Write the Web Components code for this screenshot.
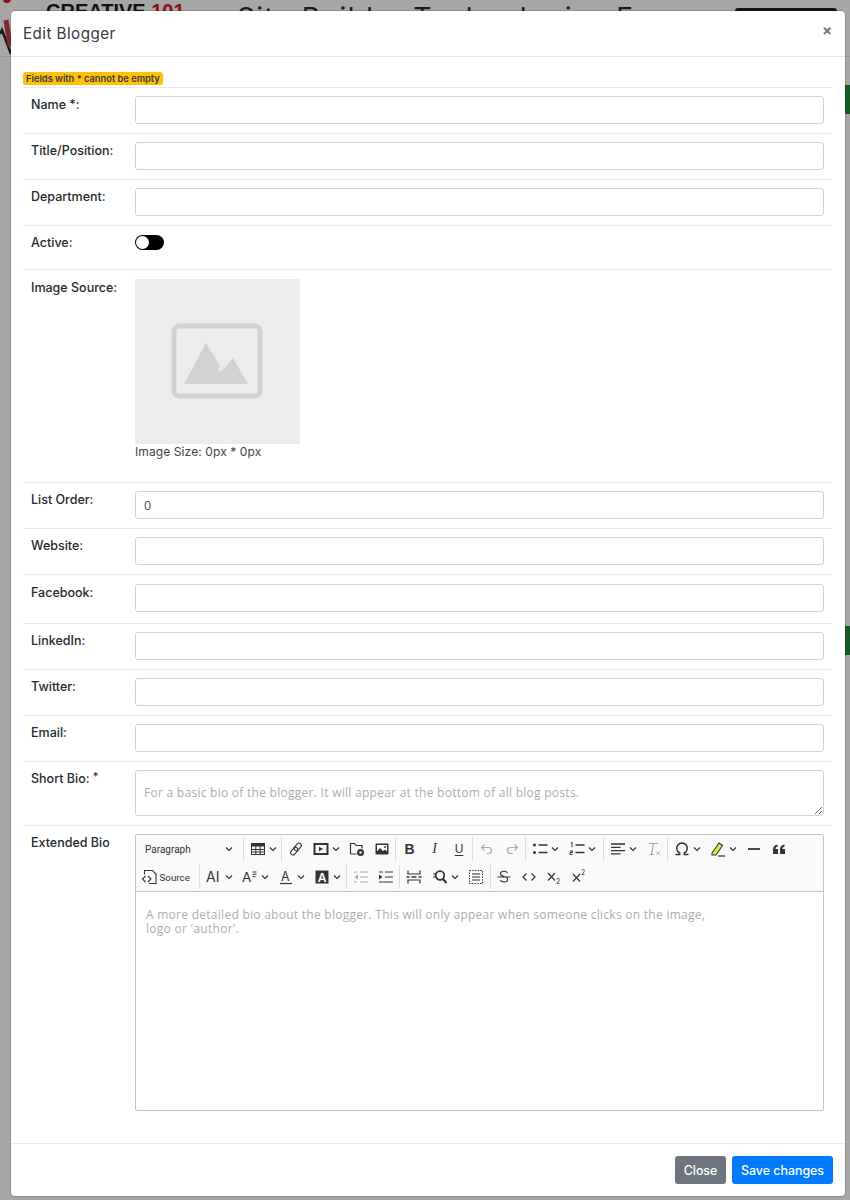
<!DOCTYPE html>
<html>
<head>
<meta charset="utf-8">
<title>Edit Blogger</title>
<style>
  html, body { margin: 0; height: 100%; }
  body { background: #a6a6a6; font-family: Inter, "Open Sans", sans-serif; color: #212529; overflow: hidden; }
</style>
</head>
<body>
<site-backdrop></site-backdrop>
<blogger-modal heading="Edit Blogger">
  <form-row label="Name *:"><text-field></text-field></form-row>
  <form-row label="Title/Position:"><text-field></text-field></form-row>
  <form-row label="Department:"><text-field></text-field></form-row>
  <form-row label="Active:" style="--row-bottom:19px"><toggle-switch></toggle-switch></form-row>
  <form-row label="Image Source:" style="--row-top:9px;--row-bottom:23px"><image-picker></image-picker></form-row>
  <form-row label="List Order:"><text-field value="0"></text-field></form-row>
  <form-row label="Website:"><text-field></text-field></form-row>
  <form-row label="Facebook:" style="--row-top:9px;--row-bottom:11px"><text-field></text-field></form-row>
  <form-row label="LinkedIn:"><text-field></text-field></form-row>
  <form-row label="Twitter:"><text-field></text-field></form-row>
  <form-row label="Email:"><text-field></text-field></form-row>
  <form-row label="Short Bio:" star><text-field multiline placeholder="For a basic bio of the blogger. It will appear at the bottom of all blog posts."></text-field></form-row>
  <form-row label="Extended Bio"><rich-editor placeholder="A more detailed bio about the blogger. This will only appear when someone clicks on the image, logo or 'author'."></rich-editor></form-row>
</blogger-modal>

<script>
// Lo que se ve detras del modal, oscurecido
class SiteBackdrop extends HTMLElement {
  constructor() {
    super();
    this.attachShadow({ mode: 'open' });
  }
  connectedCallback() {
    this.shadowRoot.innerHTML = `
      <style>
        :host { display: block; position: absolute; inset: 0; overflow: hidden; }
        .brand { position: absolute; left: 46px; top: 0; font: 700 20px/22px "Liberation Sans", sans-serif; color: #111; white-space: nowrap; }
        .brand b { color: #8f1111; }
        .title { position: absolute; left: 237px; top: 0; font: 400 28px/36px Inter, sans-serif; color: #1a1a1a; white-space: nowrap; letter-spacing: 1.4px; }
        .btn { position: absolute; left: 735px; top: 8px; width: 102px; height: 30px; background: #151515; border-radius: 3px; }
        .strip { position: absolute; left: 845px; width: 5px; height: 29px; background: #145a25; }
        .logo { position: absolute; left: 0; top: 0; }
        .line { position: absolute; left: 0; right: 0; top: 56px; height: 1px; background: #9a9a9a; }
      </style>
      <div class="brand">CREATIVE <b>101</b></div>
      <div class="title">Site Builder Technologies F</div>
      <div class="btn"></div>
      <div class="line"></div>
      <div class="strip" style="top:85px"></div>
      <div class="strip" style="top:626px"></div>
      <svg class="logo" width="12" height="56" viewBox="0 0 12 56">
        <circle cx="7" cy="-1" r="4" fill="#8f1111"/>
        <path d="M0 34 L2 30 L11 54" fill="none" stroke="#1a1a1a" stroke-width="2.5"/>
        <path d="M6 20 L10 46" stroke="#7d2a2a" stroke-width="5"/>
      </svg>
    `;
  }
}
customElements.define('site-backdrop', SiteBackdrop);

class BloggerModal extends HTMLElement {
  constructor() {
    super();
    this.attachShadow({ mode: 'open' });
  }
  connectedCallback() {
    this.shadowRoot.innerHTML = `
      <style>
        :host { display: flex; flex-direction: column; position: absolute; left: 11px; top: 11px; width: 834px; height: 1185px; box-sizing: border-box;
          background: #fff; border-radius: 4px; box-shadow: 0 0 0 1px rgba(0,0,0,.15); font-family: Inter, sans-serif; }
        header { height: 46px; box-sizing: border-box; display: flex; align-items: center; justify-content: space-between; padding: 0 12px 0 12px; border-bottom: 1px solid #e6e6e6; }
        h1 { margin: 0; font-size: 15.2px; font-weight: 400; letter-spacing: .45px; color: #343a40; }
        .x { font-size: 15px; font-weight: 700; color: #777; width: 12px; margin: -6px 0 0; line-height: 1; text-align: center; }
        main { flex: 1; padding: 15px 13px 0 12px; min-height: 0; }
        .badge { display: block; width: fit-content; height: 13px; line-height: 13px; padding: 0 3px; margin-bottom: 2px; background: #ffc107; color: #343a40; border-radius: 3px; font-size: 9.3px; font-weight: 600; }
        footer { height: 53px; box-sizing: border-box; border-top: 1px solid #e9ecef; display: flex; justify-content: flex-end; align-items: center; gap: 6px; padding: 0 12px 0 0; }
        button { height: 28px; border: 0; border-radius: 3px; color: #fff; font: 500 12.4px Inter, sans-serif; padding: 0; }
        .close { background: #6c757d; width: 51px; }
        .save { background: #007bff; width: 101px; }
      </style>
      <header><h1>${this.getAttribute('heading')}</h1><span class="x">×</span></header>
      <main>
        <span class="badge">Fields with * cannot be empty</span>
        <slot></slot>
      </main>
      <footer>
        <button class="close">Close</button>
        <button class="save">Save changes</button>
      </footer>
    `;
  }
}
customElements.define('blogger-modal', BloggerModal);

class FormRow extends HTMLElement {
  constructor() {
    super();
    this.attachShadow({ mode: 'open' });
  }
  connectedCallback() {
    const star = this.hasAttribute('star') ? ' <sup>*</sup>' : '';
    this.shadowRoot.innerHTML = `
      <style>
        :host { display: grid; grid-template-columns: 112px 689px; border-top: 1px solid #e9e9e9; padding: var(--row-top, 8px) 0 var(--row-bottom, 9px); }
        label { padding: 2px 0 0 8px; font-size: 12.5px; font-weight: 500; line-height: 14px; color: #25292d; }
        sup { font-size: 11px; line-height: 0; vertical-align: 3px; }
      </style>
      <label>${this.getAttribute('label')}${star}</label>
      <div><slot></slot></div>
    `;
  }
}
customElements.define('form-row', FormRow);

class TextField extends HTMLElement {
  constructor() {
    super();
    this.attachShadow({ mode: 'open' });
  }
  connectedCallback() {
    const multi = this.hasAttribute('multiline');
    const ph = this.getAttribute('placeholder') || '';
    const val = this.getAttribute('value') || '';
    this.shadowRoot.innerHTML = `
      <style>
        :host { display: block; }
        input, textarea { display: block; width: 100%; box-sizing: border-box; height: 28px; border: 1px solid #ced4da; border-radius: 3px; padding: 0 8px; background: #fff;
          font: 400 12px "Open Sans", sans-serif; letter-spacing: .27px; color: #495057; outline: none; }
        input { font-size: 12.5px; }
        textarea { height: 46px; padding: 13px 8px 0; resize: vertical; }
        ::placeholder { color: #a9adb1; opacity: 1; }
      </style>
      ${multi ? `<textarea placeholder="${ph}"></textarea>` : `<input value="${val}" placeholder="${ph}">`}
    `;
  }
}
customElements.define('text-field', TextField);

class ToggleSwitch extends HTMLElement {
  constructor() {
    super();
    this.attachShadow({ mode: 'open' });
  }
  connectedCallback() {
    this.shadowRoot.innerHTML = `
      <style>
        :host { display: block; width: 29px; height: 15px; box-sizing: border-box; background: #000; border-radius: 8px; padding: 1px; margin-top: 1px; }
        i { display: block; width: 13px; height: 13px; border-radius: 50%; background: #fff; }
      </style>
      <i></i>
    `;
  }
}
customElements.define('toggle-switch', ToggleSwitch);

class ImagePicker extends HTMLElement {
  constructor() {
    super();
    this.attachShadow({ mode: 'open' });
  }
  connectedCallback() {
    this.shadowRoot.innerHTML = `
      <style>
        :host { display: block; }
        .box { width: 165px; height: 165px; background: #ececec; display: flex; align-items: center; justify-content: center; }
        svg { margin: -1px 0 0 -1px; }
        p { margin: 0; font: 400 12px/15px Inter, sans-serif; letter-spacing: .1px; color: #3f4448; }
      </style>
      <div class="box">
        <svg width="92" height="76" viewBox="0 0 92 76">
          <rect x="3" y="3" width="86" height="70" rx="5" fill="none" stroke="#d2d2d2" stroke-width="5"/>
          <path d="M13 61 L35 20 L49 43 L47 47 L50 49 L62 35 L77 61 Z" fill="#d2d2d2"/>
        </svg>
      </div>
      <p>Image Size: 0px * 0px</p>
    `;
  }
}
customElements.define('image-picker', ImagePicker);

// Iconos de la barra del editor
const ICONS = {
  table: '<rect x="2.5" y="3.5" width="13" height="11" fill="none" stroke="#333"/><path d="M2.5 3.5h13v3h-13z" fill="#333"/><path d="M2.5 9.5h13M2.5 12h13M6.8 6v8M11.2 6v8" stroke="#333" fill="none"/>',
  link: '<g transform="rotate(-50 9 9)" fill="none" stroke="#333" stroke-width="1.1"><rect x="2" y="6.7" width="8.5" height="4.6" rx="2.3"/><rect x="7.5" y="6.7" width="8.5" height="4.6" rx="2.3"/></g>',
  media: '<rect x="2.5" y="4" width="13" height="10" fill="none" stroke="#333" stroke-width="2"/><path d="M7 6.8 L11 9 L7 11.2Z" fill="#333"/>',
  browse: '<path d="M2.5 14V3.5h4l1.5 2h6v3M2.5 14h6" fill="none" stroke="#333" stroke-width="1.2"/><circle cx="12.5" cy="12.5" r="3.5" fill="#333"/><circle cx="12.5" cy="12.5" r="1.2" fill="#fff"/>',
  image: '<rect x="2.5" y="3.5" width="13" height="11" rx="1" fill="#333"/><rect x="4" y="5" width="10" height="6" fill="#fff"/><path d="M4 11.5 L7 8 L10 11 L12 9.5 L14 11.5Z" fill="#333"/><circle cx="12" cy="7" r="1" fill="#333"/>',
  undo: '<path d="M6.5 4.5 L3.5 7.5 L6.5 10.5M3.5 7.5h7a3 3 0 0 1 0 6h-2" fill="none" stroke="#aaa" stroke-width="1.2"/>',
  redo: '<path d="M11.5 4.5 L14.5 7.5 L11.5 10.5M14.5 7.5h-7a3 3 0 0 0 0 6h2" fill="none" stroke="#aaa" stroke-width="1.2"/>',
  ul: '<circle cx="3.5" cy="5" r="1.5" fill="#333"/><circle cx="3.5" cy="12.5" r="1.5" fill="#333"/><path d="M7.5 5h9M7.5 12.5h9" stroke="#333" stroke-width="1.4"/>',
  ol: '<path d="M7.5 5h9M7.5 12.5h9" stroke="#333" stroke-width="1.4"/><path d="M3 3l1-.8v5M2 11h2.5v1.5h-2.5v2h2.5" fill="none" stroke="#333"/>',
  align: '<path d="M2 4h14M2 7.3h9.5M2 10.6h14M2 13.9h9.5" stroke="#333" stroke-width="1.3"/>',
  clear: '<path d="M4 3.5h9M8.5 3.5l-2 11M4.5 14.5h4" fill="none" stroke="#a5a5a5" stroke-width="1.2"/><path d="M11.5 11.5l3.5 3.5M15 11.5l-3.5 3.5" stroke="#a5a5a5"/>',
  omega: '<path d="M2.5 15h4.2v-1.5a5.3 5.3 0 1 1 4.6 0V15h4.2" fill="none" stroke="#333" stroke-width="1.5" transform="translate(0 -.5)"/>',
  marker: '<path d="M3 13 L10 3 L13.5 5.5 L7 15 H3Z" fill="#e3e34a" stroke="#333" stroke-width="1.1"/><path d="M9 16h7" stroke="#333" stroke-width="1.3"/>',
  hr: '<path d="M3 9h12" stroke="#333" stroke-width="1.8"/>',
  quote: '<path d="M3 14V9.5C3 6.5 5 5 7.5 4.5V6.5C6 7 5.5 8 5.5 9H8V14ZM10 14V9.5C10 6.5 12 5 14.5 4.5V6.5C13 7 12.5 8 12.5 9H15V14Z" fill="#333"/>',
  source: '<path d="M3.5 6.5V2.5h8l3.5 3.5v9.5h-7" fill="none" stroke="#333" stroke-width="1.1"/><path d="M4.5 8 L1.5 11 L4.5 14M7 8 L10 11 L7 14" fill="none" stroke="#333" stroke-width="1.1"/>',
  size: '<text x="1" y="14" font-family="Inter, sans-serif" font-size="14" fill="#333">AI</text>',
  style: '<text x="1" y="14" font-family="Inter, sans-serif" font-size="13.5" fill="#333">A</text><path d="M11.5 4h4M11.5 6.3h4M11.5 8.6h3" stroke="#333"/>',
  color: '<text x="4" y="12.5" font-family="Inter, sans-serif" font-size="12.5" fill="#333">A</text><path d="M3 15.5h12" stroke="#333" stroke-width="1.2"/>',
  bg: '<rect x="2.5" y="2.5" width="13" height="13" fill="#333"/><text x="4.8" y="13.5" font-family="Inter, sans-serif" font-size="12" font-weight="600" fill="#fff">A</text>',
  outdent: '<path d="M8 4h8M2 4h3M8 9h8M8 14h8M2 14h3" stroke="#aaa" stroke-width="1.2"/><path d="M6 6.5 L2.5 9 L6 11.5Z" fill="#aaa"/>',
  indent: '<path d="M8 4h8M2 4h4M8 9h8M2 14h14" stroke="#333" stroke-width="1.2"/><path d="M2 6.5 L5.5 9 L2 11.5Z" fill="#333"/>',
  pagebreak: '<path d="M3 2.5v3.5h12V2.5M3 15.5V12h12v3.500" fill="none" stroke="#333" stroke-width="1.2"/><path d="M1.5 9h3M6.5 9h5M13.5 9h3" stroke="#333" stroke-width="1.3"/>',
  find: '<circle cx="9" cy="7.5" r="4.3" fill="none" stroke="#333" stroke-width="1.8"/><path d="M12 11 L15.500 15" stroke="#333" stroke-width="2"/><path d="M2 6h2.5M2 9h2.500" stroke="#333"/>',
  select: '<rect x="2.5" y="2.5" width="13" height="13" fill="none" stroke="#333" stroke-dasharray="1.5 1.2"/><path d="M5 6h8M5 9h8M5 12h8" stroke="#333" stroke-width="1.2"/>',
  strike: '<path d="M12.5 5c-.5-1.2-2-1.8-3.5-1.8-2 0-3.5 1-3.5 2.6 0 3.5 7.2 2 7.2 5.7 0 1.5-1.7 2.5-3.7 2.5-1.7 0-3.2-.7-3.7-2M2.5 9h13" fill="none" stroke="#333" stroke-width="1.1"/>',
  code: '<path d="M6.5 5.5 L3 9 L6.5 12.5M11.5 5.5 L15 9 L11.5 12.5" fill="none" stroke="#333" stroke-width="1.2"/>',
  sub: '<path d="M3 5 L10 12.5M10 5 L3 12.5" stroke="#333" stroke-width="1.2"/><text x="11" y="16" font-family="Inter, sans-serif" font-size="7" fill="#333">2</text>',
  sup: '<path d="M3 6 L10 13.5M10 6 L3 13.5" stroke="#333" stroke-width="1.2"/><text x="11" y="7" font-family="Inter, sans-serif" font-size="7" fill="#333">2</text>'
};

class EditorTool extends HTMLElement {
  constructor() {
    super();
    this.attachShadow({ mode: 'open' });
  }
  connectedCallback() {
    const drop = this.hasAttribute('drop');
    const w = this.getAttribute('w') || (drop ? 36 : 25);
    this.shadowRoot.innerHTML = `
      <style>
        :host { display: flex; align-items: center; flex: none; height: 28px; width: ${w}px; font: 400 9.8px Roboto, sans-serif; color: #333; }
        .box { width: 25px; display: flex; justify-content: center; flex: none; }
        svg.i { width: 18px; height: 18px; display: block; }
        svg.c { width: 8px; height: 6px; margin-left: -1.5px; flex: none; }
      </style>
      <div class="box"><svg class="i" viewBox="0 0 18 18">${ICONS[this.getAttribute('icon')] || ''}</svg></div>
      <slot></slot>
      ${drop ? '<svg class="c" viewBox="0 0 8 6"><path d="M1 1.5 L4 4.5 L7 1.5" fill="none" stroke="#333" stroke-width="1.2"/></svg>' : ''}
    `;
  }
}
customElements.define('editor-tool', EditorTool);

class RichEditor extends HTMLElement {
  constructor() {
    super();
    this.attachShadow({ mode: 'open' });
  }
  connectedCallback() {
    const row1 = [
      ['table', 1, 35], '|', ['link'], ['media', 1], ['browse'], ['image'], '|',
      ['b'], ['i'], ['u'], '|', ['undo'], ['redo'], '|', ['ul', 1, 37.5], ['ol', 1, 37.5], '|',
      ['align', 1], ['clear'], '|', ['omega', 1], ['marker', 1], ['hr'], ['quote']
    ];
    const row2 = [
      ['source', 0, 60.5, '<span style="margin-left:-3px">Source</span>'], '|', ['size', 1], ['style', 1], ['color', 1], ['bg', 1], '|',
      ['outdent'], ['indent'], '|', ['pagebreak', 0, 26.5], ['find', 1], ['select'], '|',
      ['strike'], ['code'], ['sub'], ['sup']
    ];
    const render = (list) => list.map((t) => {
      if (t === '|') return '<s></s>';
      if (t[0] === 'b') return '<b class="f">B</b>';
      if (t[0] === 'i') return '<i class="f">I</i>';
      if (t[0] === 'u') return '<u class="f" style="width:24px">U</u>';
      return `<editor-tool icon="${t[0]}" ${t[1] ? 'drop' : ''} ${t[2] ? `w="${t[2]}"` : ''}>${t[3] || ''}</editor-tool>`;
    }).join('');
    this.shadowRoot.innerHTML = `
      <style>
        :host { display: block; height: 277px; box-sizing: border-box; border: 1px solid #c4c4c4; border-radius: 2px; background: #fff; }
        .bar { background: #fafafa; border-bottom: 1px solid #c4c4c4; height: 57px; box-sizing: border-box; }
        .row { display: flex; align-items: center; height: 28px; }
        .row2 { padding-left: 1.5px; }
        s { display: block; width: 1px; height: 24px; background: #dcdcdc; margin: 0 1px; flex: none; }
        .para { width: 106px; display: flex; justify-content: space-between; align-items: center; padding: 0 9px 0 9px; box-sizing: border-box; font: 400 10px Roboto, sans-serif; color: #333; flex: none; }
        .para svg { width: 8px; height: 6px; }
        .f { display: block; width: 25px; text-align: center; font-family: "Liberation Sans", sans-serif; font-size: 14px; color: #333; flex: none; text-decoration-thickness: 1px; }
        i.f { font-family: "Liberation Serif", serif; font-size: 14px; }
        u.f { font-size: 12px; text-underline-offset: 2px; }
        .area { padding: 16px 100px 0 10px; font: 400 12px/14px "Open Sans", sans-serif; letter-spacing: .27px; color: #a9adb1; }
      </style>
      <div class="bar">
        <div class="row">
          <div class="para">Paragraph<svg viewBox="0 0 8 6"><path d="M1 1.5 L4 4.5 L7 1.5" fill="none" stroke="#333" stroke-width="1.2"/></svg></div>
          <s></s>${render(row1)}
        </div>
        <div class="row row2">${render(row2)}</div>
      </div>
      <div class="area">${this.getAttribute('placeholder')}</div>
    `;
  }
}
customElements.define('rich-editor', RichEditor);
</script>
</body>
</html>
